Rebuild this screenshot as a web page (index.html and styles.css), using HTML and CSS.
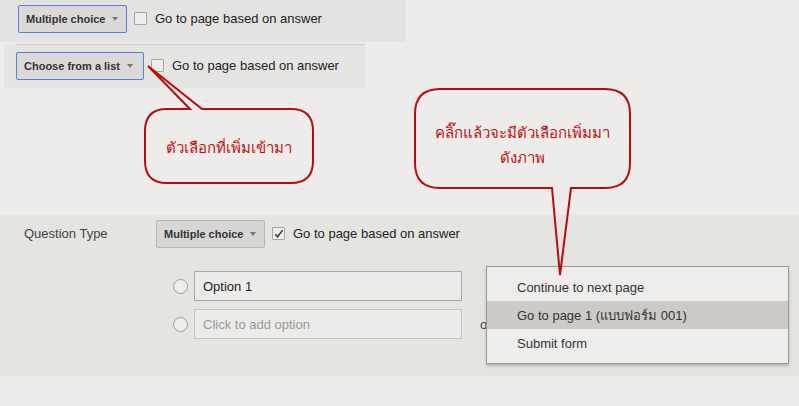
FILE: index.html
```html
<!DOCTYPE html>
<html>
<head>
<meta charset="utf-8">
<link rel="stylesheet" href="styles.css">
</head>
<body>
<div class="page">
  <div class="panel-top">
    <div class="dropdown active">Multiple choice <span class="caret"></span></div>
    <span class="checkbox"></span>
    <span class="label">Go to page based on answer</span>
  </div>
  <div class="divider"></div>
  <div class="panel-second">
    <div class="dropdown active">Choose from a list <span class="caret"></span></div>
    <span class="checkbox"></span>
    <span class="label">Go to page based on answer</span>
  </div>

  <div class="panel-question">
    <div class="qrow">
      <span class="qlabel">Question Type</span>
      <div class="dropdown plain">Multiple choice <span class="caret"></span></div>
      <span class="checkbox checked"><svg viewBox="0 0 12 12" width="12" height="12"><path d="M2.5 6.2 L5 9 L10.5 1.8" fill="none" stroke="#333" stroke-width="1.6"/></svg></span>
      <span class="label">Go to page based on answer</span>
    </div>
    <div class="options">
      <div class="opt"><span class="radio"></span><div class="input">Option 1</div></div>
      <div class="opt"><span class="radio"></span><div class="input placeholder">Click to add option</div><span class="stray">o</span></div>
    </div>
  </div>

  <div class="menu">
    <div class="mi">Continue to next page</div>
    <div class="mi sel">Go to page 1 (แบบฟอร์ม 001)</div>
    <div class="mi">Submit form</div>
  </div>

  <div class="callout c1">
    <svg class="shape" width="799" height="406" viewBox="0 0 799 406">
      <path d="M167 109 L190 109 L148 66 L202 109 L291 109 Q313 109 313 131 L313 161 Q313 183 291 183 L167 183 Q145 183 145 161 L145 131 Q145 109 167 109 Z" fill="none" stroke="#b70d0d" stroke-width="2" stroke-linejoin="miter"/>
      <path d="M440 89 L605 89 Q630 89 630 114 L630 163 Q630 188 605 188 L571 188 L560 275 L552 188 L440 188 Q415 188 415 163 L415 114 Q415 89 440 89 Z" fill="none" stroke="#b70d0d" stroke-width="2"/>
    </svg>
    <div class="ctext t1">ตัวเลือกที่เพิ่มเข้ามา</div>
    <div class="ctext t2">คลิ๊กแล้วจะมีตัวเลือกเพิ่มมา<br>ดังภาพ</div>
  </div>
</div>
</body>
</html>
```

FILE: styles.css
```css
html, body {
  margin: 0;
  padding: 0;
}
body {
  background: #eeecea;
  font-family: "Liberation Sans", Arial, "Noto Sans", "DejaVu Sans", sans-serif;
  color: #222;
}
.page {
  position: relative;
  width: 799px;
  height: 406px;
  overflow: hidden;
  background: #eeecea;
}
.panel-top {
  width: 388px;
  height: 37px;
  padding: 5px 0 0 18px;
  background: #e5e3e1;
  display: flex;
  align-items: flex-start;
}
.divider {
  margin: 2px 0 0 16px;
  width: 349px;
  height: 1px;
  background: #cbc9c7;
}
.panel-second {
  margin-left: 4px;
  width: 349px;
  height: 36px;
  padding: 7px 0 0 12px;
  background: #e7e5e3;
  display: flex;
  align-items: flex-start;
}
.dropdown {
  box-sizing: border-box;
  height: 28px;
  display: flex;
  align-items: center;
  padding: 0 6px 0 7px;
  font-size: 11px;
  font-weight: bold;
  color: #333;
  background: #dcdad8;
  border: 1px solid #b5b3b1;
  border-radius: 2px;
}
.dropdown.active {
  border-color: #5680d6;
}
.panel-top .dropdown { width: 109px; }
.panel-second .dropdown { width: 128px; }
.caret {
  display: inline-block;
  width: 0;
  height: 0;
  margin-left: 7px;
  border-left: 3.5px solid transparent;
  border-right: 3.5px solid transparent;
  border-top: 4px solid #777;
}
.checkbox {
  box-sizing: border-box;
  width: 13px;
  height: 13px;
  margin: 7px 0 0 7px;
  border: 1px solid #a8a6a4;
  background: #efedeb;
  border-radius: 1px;
  display: flex;
  align-items: center;
  justify-content: center;
}
.checkbox svg { display: block; }
.label {
  margin: 6px 0 0 8px;
  font-size: 13px;
  line-height: 16px;
  color: #222;
}
.panel-question {
  margin-top: 127px;
  height: 161px;
  background: #e6e4e1;
  box-sizing: border-box;
  padding-top: 5px;
}
.qrow {
  display: flex;
  align-items: flex-start;
}
.qlabel {
  width: 132px;
  padding-left: 24px;
  margin-top: 6px;
  font-size: 13px;
  line-height: 16px;
  color: #444;
}
.dropdown.plain {
  width: 109px;
  background: #d8d6d4;
  border-color: #b9b7b5;
}
.options {
  margin: 23px 0 0 173px;
  display: flex;
  flex-direction: column;
  gap: 8px;
}
.opt {
  display: flex;
  align-items: center;
  height: 30px;
}
.radio {
  box-sizing: border-box;
  width: 15px;
  height: 15px;
  border-radius: 50%;
  border: 1px solid #9d9b99;
  background: #efedeb;
}
.input {
  box-sizing: border-box;
  margin-left: 6px;
  width: 268px;
  height: 30px;
  border: 1px solid #aaa8a6;
  background: #edebe9;
  padding-left: 8px;
  display: flex;
  align-items: center;
  font-size: 13px;
  color: #222;
}
.input.placeholder {
  color: #9a9896;
  border-color: #c6c4c2;
}
.stray {
  margin-left: 18px;
  font-size: 13px;
  color: #444;
}
.menu {
  position: absolute;
  left: 486px;
  top: 266px;
  width: 301px;
  padding: 6px 0;
  background: #efedeb;
  border: 1px solid #9c9a98;
  box-shadow: 0 2px 3px rgba(0,0,0,0.2);
}
.mi {
  height: 28px;
  line-height: 29px;
  padding-left: 30px;
  font-size: 13px;
  color: #333;
}
.mi.sel {
  background: #cdc9c6;
}
.callout {
  position: absolute;
  left: 0;
  top: 0;
  width: 799px;
  height: 406px;
  pointer-events: none;
}
.shape {
  position: absolute;
  left: 0;
  top: 0;
}
.ctext {
  position: absolute;
  display: flex;
  align-items: center;
  justify-content: center;
  text-align: center;
  color: #c40f0f;
  font-size: 15px;
  line-height: 25px;
}
.t1 {
  left: 145px;
  top: 110px;
  width: 168px;
  height: 74px;
}
.t2 {
  left: 415px;
  top: 108px;
  width: 215px;
  height: 73px;
}
```
